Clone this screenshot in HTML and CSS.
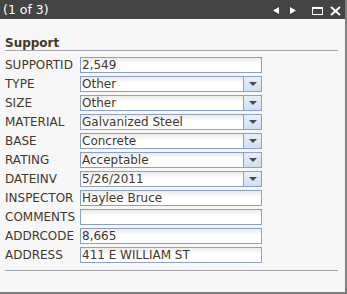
FILE: index.html
```html
<!DOCTYPE html>
<html lang="en">
<head>
  <meta charset="UTF-8" />
  <title>Support</title>
  <link rel="stylesheet" href="styles.css">
</head>
<body>

  <div class="popup">
    <div class="titlebar">
      <span class="title">(1 of 3)</span>
      <svg class="tools" width="68" height="19" viewBox="0 0 68 19">
        <polygon points="0,10.5 6,7 6,14" fill="#fff"/>
        <polygon points="17,7 23,10.5 17,14" fill="#fff"/>
        <rect x="39.5" y="7.5" width="10" height="7" fill="none" stroke="#fff" stroke-width="1"/>
        <line x1="39" y1="8" x2="50" y2="8" stroke="#fff" stroke-width="2"/>
        <line x1="58" y1="7" x2="67" y2="15" stroke="#fff" stroke-width="2"/>
        <line x1="67" y1="7" x2="58" y2="15" stroke="#fff" stroke-width="2"/>
      </svg>
    </div>

    <div class="content">
      <div class="heading">Support</div>

      <div class="fields">
        <div class="label">SUPPORTID</div>
        <div class="box">2,549</div>

        <div class="label">TYPE</div>
        <div class="box select">Other<span class="drop"></span></div>

        <div class="label">SIZE</div>
        <div class="box select">Other<span class="drop"></span></div>

        <div class="label">MATERIAL</div>
        <div class="box select">Galvanized Steel<span class="drop"></span></div>

        <div class="label">BASE</div>
        <div class="box select">Concrete<span class="drop"></span></div>

        <div class="label">RATING</div>
        <div class="box select">Acceptable<span class="drop"></span></div>

        <div class="label">DATEINV</div>
        <div class="box select">5/26/2011<span class="drop"></span></div>

        <div class="label">INSPECTOR</div>
        <div class="box">Haylee Bruce</div>

        <div class="label">COMMENTS</div>
        <div class="box"></div>

        <div class="label">ADDRCODE</div>
        <div class="box">8,665</div>

        <div class="label">ADDRESS</div>
        <div class="box">411 E WILLIAM ST</div>
      </div>

      <div class="rule"></div>
    </div>
  </div>

</body>
</html>
```

FILE: styles.css
```css
html {
  background: #7d7f80;
}

body {
  margin: 0;
  font-family: 'DejaVu Sans', Verdana, sans-serif;
  font-size: 12px;
  color: #43372b;
}

.popup {
  width: 345px;
  height: 292px;
  background: #f7f7f7;
  display: flex;
  flex-direction: column;
}

.titlebar {
  height: 19px;
  background: #444;
  color: #fff;
  display: flex;
  align-items: center;
  justify-content: space-between;
  padding: 0 4px 0 3px;
}

.title {
  font-size: 12.5px;
  line-height: 19px;
}

.tools {
  display: block;
}

.content {
  padding: 17px 7px 0 5px;
}

.heading {
  font-weight: bold;
  line-height: 14px;
  height: 14px;
  border-bottom: 1px solid #a4a7ac;
}

.fields {
  display: grid;
  grid-template-columns: 75px 182px;
  grid-auto-rows: 16px;
  row-gap: 3px;
  margin-top: 6px;
}

.label {
  line-height: 16px;
}

.box {
  position: relative;
  box-sizing: border-box;
  height: 16px;
  border: 1px solid #8ba0c2;
  background: linear-gradient(#ebebeb, #fff 6px);
  line-height: 14px;
  padding-left: 1px;
  white-space: nowrap;
  overflow: hidden;
}

.drop {
  position: absolute;
  top: 0;
  right: 0;
  width: 17px;
  height: 14px;
  border-left: 1px solid #8ba0c2;
  background: linear-gradient(#e9f0fa, #cfdff2);
}

.drop::after {
  content: "";
  position: absolute;
  left: 5px;
  top: 5px;
  border-left: 4px solid transparent;
  border-right: 4px solid transparent;
  border-top: 4px solid #4a4a4a;
}

.rule {
  margin-top: 7px;
  border-top: 1px solid #a4a7ac;
}
```
